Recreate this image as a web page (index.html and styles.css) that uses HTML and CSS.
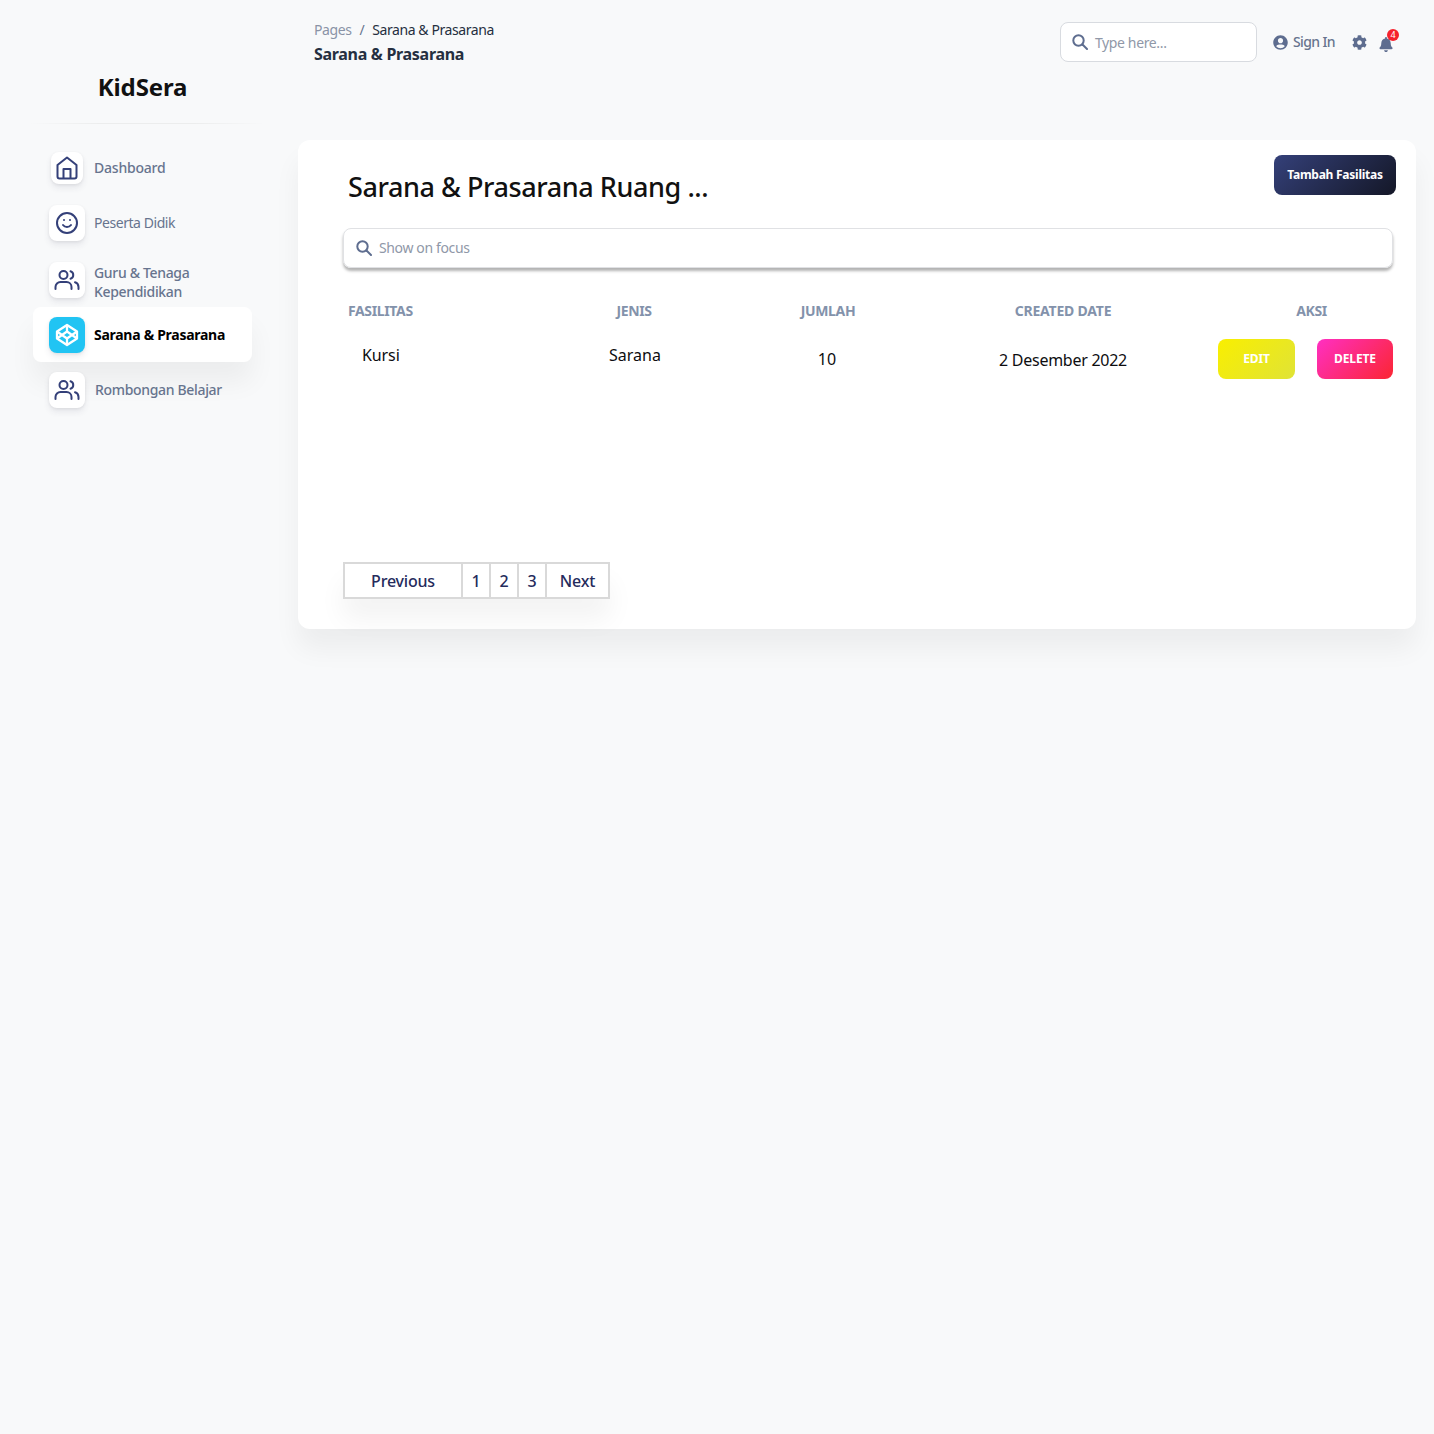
FILE: index.html
```html
<!DOCTYPE html>
<html lang="id">
<head>
<meta charset="utf-8">
<title>KidSera</title>
<link rel="stylesheet" href="styles.css">
</head>
<body>
<div class="app">
  <aside class="sidebar">
    <div class="brand">KidSera</div>
    <div class="brand-rule"></div>
    <nav class="nav">
      <a class="nav-item item-dash">
        <span class="nav-icon icon-dash"><svg width="24" height="24" viewBox="0 0 24 24" fill="none" stroke="#344079" stroke-width="2" stroke-linejoin="round"><path d="M12 1.500 L21.500 9 V20.500 a2 2 0 0 1-2 2 H4.500 a2 2 0 0 1-2-2 V9 Z"/><path d="M8.500 22.500 V13 h7 V22.500"/></svg></span>
        <span class="nav-label label-dash">Dashboard</span>
      </a>
      <a class="nav-item item-peserta">
        <span class="nav-icon"><svg width="24" height="24" viewBox="0 0 24 24" fill="none" stroke="#344079" stroke-width="2" stroke-linecap="round"><circle cx="12" cy="12" r="10"/><path d="M8 14 s1.500 2 4 2 4-2 4-2"/><path d="M9 9 h.01 M15 9 h.01"/></svg></span>
        <span class="nav-label light">Peserta Didik</span>
      </a>
      <a class="nav-item item-guru">
        <span class="nav-icon"><svg width="26" height="24" viewBox="0 0 26 24" fill="none" stroke="#344079" stroke-width="2" stroke-linecap="round"><path d="M1.500 21 v-2 a5 5 0 0 1 5-5 h6 a5 5 0 0 1 5 5 v2"/><circle cx="9.500" cy="7" r="4"/><path d="M24.500 21 v-2 a5 5 0 0 0-3.500-4.700"/><path d="M16.500 3.200 a4 4 0 0 1 0 7.600"/></svg></span>
        <span class="nav-label label-guru">Guru &amp; Tenaga Kependidikan</span>
      </a>
      <a class="nav-item active">
        <span class="nav-icon cyan"><svg width="24" height="24" viewBox="0 0 24 24" fill="none" stroke="#fff" stroke-width="2.300" stroke-linejoin="round"><path d="M12 2 L22 8.500 V15.500 L12 22 L2 15.500 V8.500 Z"/><path d="M12 22 V15.500 M22 8.500 L12 15.500 L2 8.500 M2 15.500 L12 8.500 L22 15.500 M12 2 V8.500"/></svg></span>
        <span class="nav-label">Sarana &amp; Prasarana</span>
      </a>
      <a class="nav-item item-rombel">
        <span class="nav-icon"><svg width="26" height="24" viewBox="0 0 26 24" fill="none" stroke="#344079" stroke-width="2" stroke-linecap="round"><path d="M1.500 21 v-2 a5 5 0 0 1 5-5 h6 a5 5 0 0 1 5 5 v2"/><circle cx="9.500" cy="7" r="4"/><path d="M24.500 21 v-2 a5 5 0 0 0-3.500-4.700"/><path d="M16.500 3.200 a4 4 0 0 1 0 7.600"/></svg></span>
        <span class="nav-label">Rombongan Belajar</span>
      </a>
    </nav>
  </aside>

  <main class="main">
    <header class="topbar">
      <div class="crumbs">
        <div class="crumb-line"><span class="crumb-muted">Pages</span><span class="crumb-sep">/</span><span>Sarana &amp; Prasarana</span></div>
        <div class="crumb-title">Sarana &amp; Prasarana</div>
      </div>
      <div class="top-actions">
        <div class="top-search">
          <svg width="16" height="16" viewBox="0 0 16 16" fill="none" stroke="#5e6d8f" stroke-width="2" stroke-linecap="round"><circle cx="6.500" cy="6.500" r="5.200"/><path d="M10.500 10.500 L15 15"/></svg>
          <span class="placeholder">Type here...</span>
        </div>
        <a class="sign-in">
          <svg width="15" height="15" viewBox="0 0 512 512" fill="#5e6d8f"><path d="M256 8C119 8 8 119 8 256s111 248 248 248 248-111 248-248S393 8 256 8zm0 96c48.600 0 88 39.400 88 88s-39.400 88-88 88-88-39.400-88-88 39.400-88 88-88zm0 344c-58.700 0-111.300-26.600-146.500-68.200 18.800-35.400 55.600-59.800 98.500-59.800 2.400 0 4.800.4 7.100 1.100 13 4.200 26.600 6.900 40.900 6.900 14.300 0 28-2.700 40.900-6.900 2.300-.7 4.700-1.100 7.100-1.100 42.900 0 79.700 24.400 98.500 59.800C367.300 421.400 314.700 448 256 448z"/></svg>
          <span>Sign In</span>
        </a>
        <svg class="gear" width="15" height="15" viewBox="0 0 512 512" fill="#5e6d8f"><path d="M487.400 315.700l-42.600-24.600c4.300-23.200 4.300-47 0-70.200l42.600-24.600c4.900-2.800 7.100-8.600 5.500-14-11.100-35.600-30-67.800-54.700-94.600-3.800-4.100-10-5.100-14.800-2.300L380.800 110c-17.900-15.400-38.500-27.300-60.800-35.100V25.800c0-5.600-3.900-10.500-9.400-11.700-36.700-8.200-74.300-7.800-109.200 0-5.500 1.200-9.400 6.100-9.400 11.700V75c-22.200 7.900-42.800 19.800-60.800 35.100L88.700 85.500c-4.900-2.800-11-1.900-14.800 2.300-24.700 26.700-43.600 58.900-54.700 94.600-1.700 5.400.6 11.200 5.500 14L67.300 221c-4.300 23.200-4.300 47 0 70.200l-42.600 24.600c-4.900 2.800-7.100 8.600-5.500 14 11.100 35.600 30 67.800 54.700 94.600 3.800 4.100 10 5.100 14.800 2.300l42.600-24.600c17.900 15.400 38.500 27.300 60.800 35.100v49.200c0 5.600 3.900 10.500 9.400 11.700 36.700 8.200 74.300 7.800 109.200 0 5.500-1.200 9.400-6.100 9.400-11.700v-49.200c22.200-7.900 42.800-19.800 60.800-35.100l42.600 24.600c4.900 2.800 11 1.900 14.800-2.300 24.700-26.700 43.600-58.900 54.700-94.600 1.500-5.500-.7-11.300-5.600-14.100zM256 336c-44.100 0-80-35.900-80-80s35.900-80 80-80 80 35.900 80 80-35.900 80-80 80z"/></svg>
        <span class="bell">
          <svg width="14" height="15" viewBox="0 0 448 512" fill="#5e6d8f"><path d="M224 512c35.300 0 64-28.700 64-64H160c0 35.300 28.700 64 64 64zm215.400-149.700c-19.300-20.800-55.500-52-55.500-154.300 0-77.700-54.500-139.900-127.900-155.200V32c0-17.700-14.300-32-32-32s-32 14.300-32 32v20.800C118.600 68.100 64.100 130.300 64.100 208c0 102.300-36.200 133.500-55.500 154.300-6 6.400-8.700 14.100-8.600 21.700.1 16.400 13 32 32.100 32h383.800c19.100 0 32-15.600 32.100-32 .1-7.600-2.600-15.300-8.600-21.700z"/></svg>
          <span class="badge">4</span>
        </span>
      </div>
    </header>

    <section class="card">
      <a class="add-btn">Tambah Fasilitas</a>
      <h1 class="card-title">Sarana &amp; Prasarana Ruang ...</h1>
      <div class="filter">
        <svg width="16" height="16" viewBox="0 0 16 16" fill="none" stroke="#5e6d8f" stroke-width="2" stroke-linecap="round"><circle cx="6.500" cy="6.500" r="5.200"/><path d="M10.500 10.500 L15 15"/></svg>
        <span class="placeholder">Show on focus</span>
      </div>
      <div class="table">
        <div class="thead">
          <div class="th c-fas">FASILITAS</div>
          <div class="th c-jen">JENIS</div>
          <div class="th c-jum">JUMLAH</div>
          <div class="th c-date">CREATED DATE</div>
          <div class="th c-aksi">AKSI</div>
        </div>
        <div class="trow">
          <div class="td c-fas td-fas">Kursi</div>
          <div class="td c-jen td-jen">Sarana</div>
          <div class="td c-jum td-jum">10</div>
          <div class="td c-date td-date">2 Desember 2022</div>
          <div class="c-aksi actions">
            <a class="btn edit">EDIT</a>
            <a class="btn delete">DELETE</a>
          </div>
        </div>
      </div>
      <div class="pager">
        <a class="pg pg-prev">Previous</a>
        <a class="pg pg-num">1</a>
        <a class="pg pg-num">2</a>
        <a class="pg pg-num">3</a>
        <a class="pg pg-next">Next</a>
      </div>
    </section>
  </main>
</div>
</body>
</html>
```
FILE: styles.css
```css
* { box-sizing: border-box; }
html, body { margin: 0; padding: 0; }
body {
  min-height: 1434px;
  background: #f8f9fa;
  font-family: "Noto Sans", "Open Sans", sans-serif;
  color: #0d0d0f;
}
a { color: inherit; text-decoration: none; }

.app { display: flex; align-items: flex-start; }

.sidebar { width: 298px; flex: none; padding: 71px 0 0 33px; }
.brand {
  width: 219px;
  text-align: center;
  font-size: 24px;
  line-height: 32px;
  font-weight: 700;
  letter-spacing: -.15px;
  color: #111;
}
.brand-rule {
  width: 236px;
  height: 1px;
  margin: 20px 0 0 -4px;
  background: linear-gradient(90deg, rgba(232,233,234,0), #eceded 30%, #eceded 70%, rgba(232,233,234,0));
}
.nav { display: flex; flex-direction: column; width: 219px; margin-top: 16px; }
.nav-item {
  display: flex;
  align-items: center;
  gap: 9px;
  height: 55px;
  padding-left: 16px;
  font-size: 14px;
  line-height: 19px;
  font-weight: 500;
  letter-spacing: -.33px;
  color: #67748e;
}
.item-guru { height: 57px; padding-top: 3px; }
.label-guru { margin-top: 3px; }
.label-dash { letter-spacing: -.22px; }
.item-rombel { gap: 10px; }
.nav-label.light { font-weight: 400; letter-spacing: -.45px; }
.nav-icon {
  width: 36px;
  height: 36px;
  flex: none;
  display: flex;
  align-items: center;
  justify-content: center;
  background: #fff;
  border-radius: 8px;
  box-shadow: 0 4px 6px rgba(50,50,93,.09), 0 1px 3px rgba(0,0,0,.07);
}
.icon-dash { width: 32px; height: 32px; margin: 0 2px; }
.item-dash { gap: 9px; }
.nav-icon.cyan { background: #21c4f3; }
.active {
  background: #fff;
  border-radius: 8px;
  font-weight: 700;
  letter-spacing: -.28px;
  color: #000;
  box-shadow: 0 20px 27px rgba(0,0,0,.05);
}

.main { flex: 1; min-width: 0; padding-right: 18px; }
.topbar {
  display: flex;
  justify-content: space-between;
  height: 140px;
  padding: 20px 0 0 16px;
}
.crumb-line { font-size: 14px; line-height: 20px; letter-spacing: -.42px; color: #252f40; }
.crumb-muted { color: #8a93a6; }
.crumb-sep { margin: 0 8px; color: #67748e; }
.crumb-title { font-size: 16px; line-height: 20px; margin-top: 4px; font-weight: 700; letter-spacing: -.3px; color: #252f40; }
.top-actions { display: flex; align-items: flex-start; padding: 2px 23px 0 0; }
.top-search {
  width: 197px;
  height: 40px;
  display: flex;
  align-items: center;
  gap: 7px;
  padding-left: 11px;
  background: #fff;
  border: 1px solid #d8dbe0;
  border-radius: 8px;
}
.placeholder { font-size: 14px; letter-spacing: -.36px; color: #9098a8; }
.sign-in {
  display: flex;
  align-items: center;
  gap: 5px;
  margin: 10px 0 0 16px;
  font-size: 14px;
  line-height: 20px;
  font-weight: 500;
  letter-spacing: -.6px;
  color: #67748e;
}
.gear { margin: 13px 0 0 17px; }
.bell { position: relative; display: block; margin: 13px 0 0 12px; height: 15px; }
.badge {
  position: absolute;
  top: -6px;
  left: 8px;
  width: 12px;
  height: 12px;
  border-radius: 50%;
  background: #f5222d;
  color: #fff;
  font-size: 9px;
  line-height: 12px;
  text-align: center;
}

.card {
  position: relative;
  height: 489px;
  padding: 27px 23px 0 45px;
  background: #fff;
  border-radius: 12px;
  box-shadow: 0 20px 27px rgba(0,0,0,.05);
}
.add-btn {
  position: absolute;
  top: 15px;
  right: 20px;
  width: 122px;
  height: 40px;
  display: flex;
  align-items: center;
  justify-content: center;
  padding-bottom: 1px;
  border-radius: 8px;
  background: linear-gradient(135deg, #344079, #141727);
  color: #fff;
  font-size: 12px;
  font-weight: 700;
  letter-spacing: -.25px;
}
.card-title {
  margin: 0 0 0 5px;
  font-size: 27px;
  line-height: 40px;
  font-weight: 500;
  letter-spacing: -.43px;
  color: #111;
}
.filter {
  height: 40px;
  margin-top: 21px;
  display: flex;
  align-items: center;
  gap: 7px;
  padding: 0 0 1px 12px;
  border: 1px solid #e0e1e4;
  border-radius: 8px;
  box-shadow: 0 3px 3px rgba(0,0,0,.3);
}
.table { margin-top: 32px; }
.thead, .trow { display: grid; grid-template-columns: 211px 160px 228px 242px 1fr; }
.thead { height: 20px; align-items: center; }
.th { font-size: 14px; font-weight: 700; letter-spacing: -.36px; color: #8392ab; text-align: center; }
.th.c-date { letter-spacing: -.2px; }
.th.c-fas { text-align: left; padding-left: 5px; }
.th.c-aksi { padding-left: 46px; }
.trow { margin-top: 19px; height: 40px; align-items: center; }
.td { font-size: 16px; text-align: center; color: #0d0d0f; }
.td.td-fas { text-align: left; padding: 0 0 8px 19px; letter-spacing: -.1px; }
.td.td-jen { padding: 0 0 8px 2px; }
.td.td-jum { padding-right: 2px; }
.td.td-date { padding-top: 2px; letter-spacing: -.27px; }
.actions { display: flex; justify-content: flex-end; gap: 22px; }
.btn {
  height: 40px;
  display: flex;
  align-items: center;
  justify-content: center;
  padding-bottom: 2px;
  border-radius: 8px;
  color: #fff;
  font-size: 12px;
  font-weight: 700;
  letter-spacing: -.1px;
}
.edit { width: 77px; background: linear-gradient(135deg, #f9ef00, #e0e336); }
.delete { width: 76px; background: linear-gradient(135deg, #ff2fc3, #fb2632); }
.pager {
  display: flex;
  width: max-content;
  margin-top: 183px;
  box-shadow: 0 20px 27px rgba(0,0,0,.05);
}
.pg {
  height: 37px;
  display: flex;
  align-items: center;
  justify-content: center;
  font-size: 16px;
  font-weight: 500;
  letter-spacing: -.2px;
  color: #252b5c;
  border: 2px solid #d9d9d9;
  margin-left: -2px;
  background: #fff;
}
.pg-prev { width: 120px; margin-left: 0; }
.pg-num { width: 30px; }
.pg-next { width: 65px; }
```
